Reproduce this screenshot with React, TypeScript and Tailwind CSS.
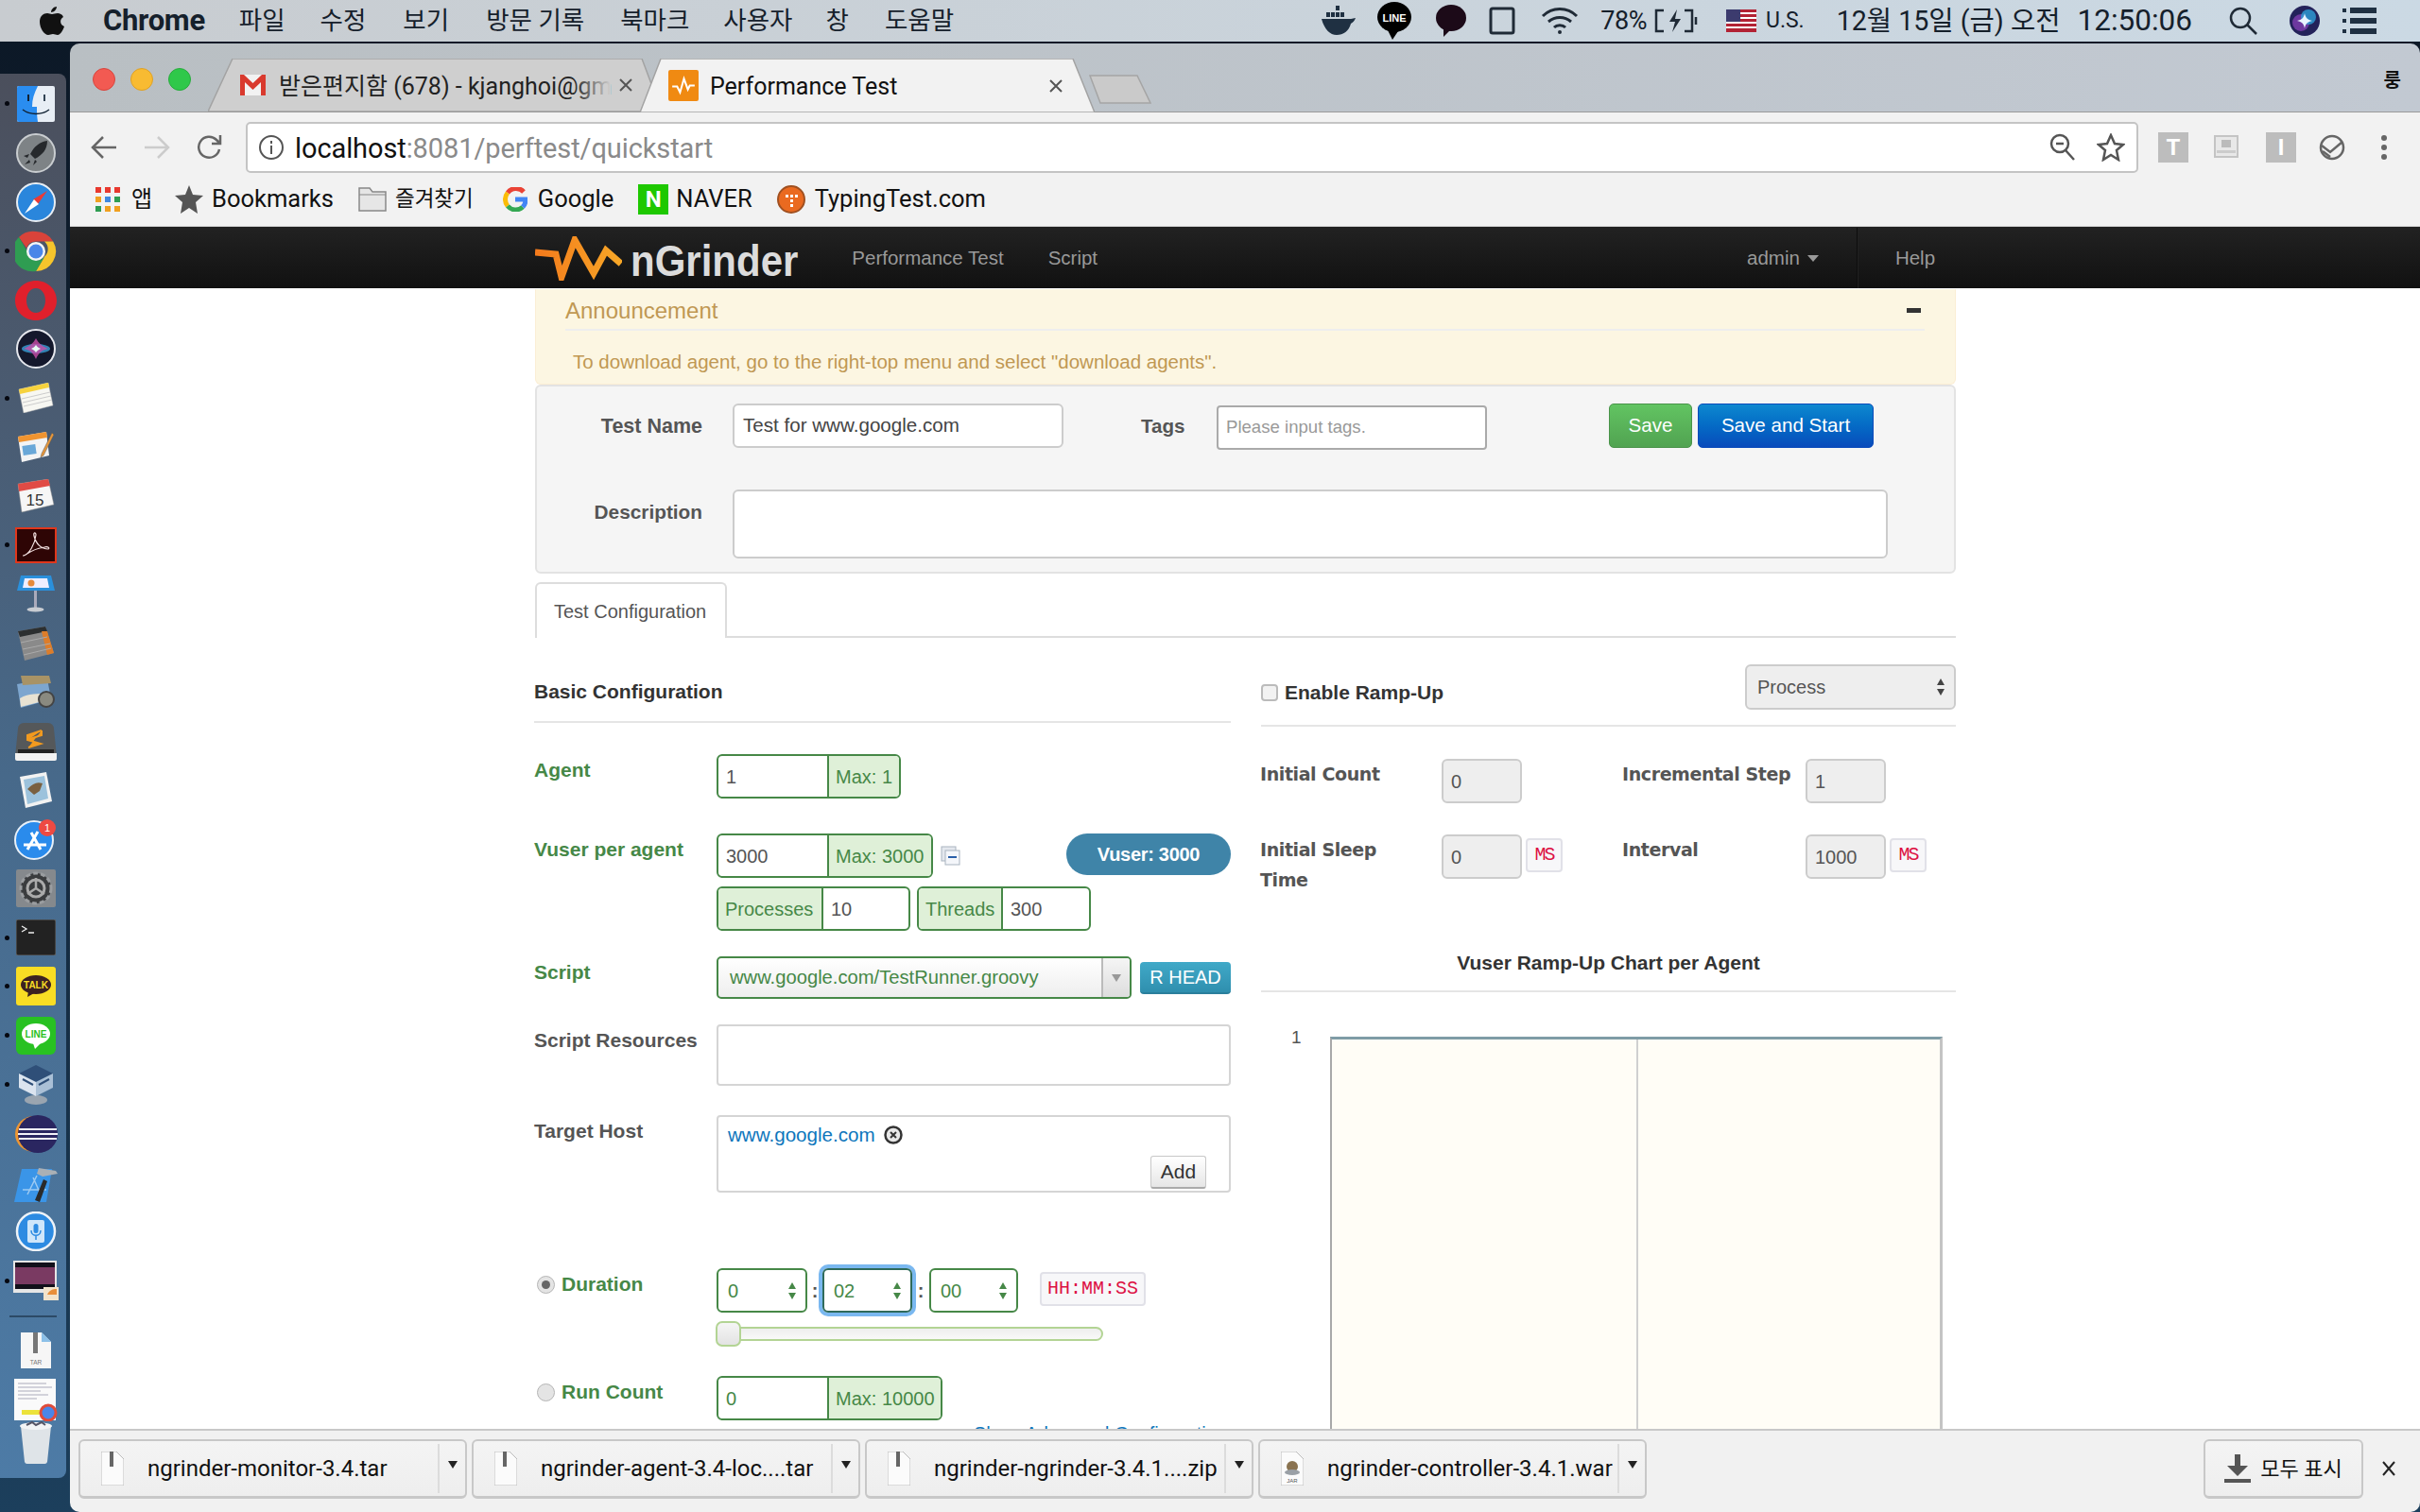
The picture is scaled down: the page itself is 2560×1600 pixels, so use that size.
import React from "react";

const ui = "font-['Roboto','Noto_Sans_CJK_KR',sans-serif]";

function DockIcon({ name }: { name: string }) {
  switch (name) {
    case "finder":
      return (
        <svg width="40" height="38" viewBox="0 0 40 38">
          <rect width="40" height="38" rx="2" fill="#e8eef5" />
          <path d="M2 0h20c-4 8-6 14-6 22h5c0 6 0 10 1 16H2a2 2 0 0 1-2-2V2a2 2 0 0 1 2-2z" fill="#2a8df0" />
          <path d="M6 25c8 6 20 6 28 0" stroke="#123" strokeWidth="1.5" fill="none" />
          <rect x="11" y="9" width="2" height="7" fill="#123" />
          <rect x="28" y="9" width="2" height="7" fill="#345" />
        </svg>
      );
    case "rocket":
      return (
        <svg width="42" height="42" viewBox="0 0 42 42">
          <circle cx="21" cy="21" r="20" fill="#7e8386" stroke="#c9cdd0" strokeWidth="2" />
          <path d="M33 8c-8 1-14 6-18 14l5 5c8-4 13-10 13-19zM14 22l-6 2 4 2zM20 28l-2 6 4-4zM14 28l-5 5 6-2z" fill="#26292c" />
        </svg>
      );
    case "safari":
      return (
        <svg width="42" height="42" viewBox="0 0 42 42">
          <circle cx="21" cy="21" r="20" fill="#2a86dc" stroke="#e8eef4" strokeWidth="2" />
          <path d="M33 9L18 18l5 5z" fill="#ea3a35" />
          <path d="M9 33l15-10-5-5z" fill="#fff" />
        </svg>
      );
    case "chrome":
      return (
        <svg width="44" height="44" viewBox="0 0 44 44">
          <path d="M22 1a21 21 0 0 1 18.2 10.5H22a10.500 10.500 0 0 0-10 7L4 7A21 21 0 0 1 22 1z" fill="#d9433a" />
          <path d="M40.200 11.500A21 21 0 0 1 22 43l9-15.500a10.500 10.500 0 0 0 0-16z" fill="#f6c52c" />
          <path d="M4 7l9 15.500a10.500 10.500 0 0 0 18 5.500L22 43A21 21 0 0 1 4 7z" fill="#2f9d52" />
          <circle cx="22" cy="22" r="10" fill="#f5f5f5" />
          <circle cx="22" cy="22" r="7.500" fill="#4a86e8" />
        </svg>
      );
    case "opera":
      return (
        <svg width="44" height="42" viewBox="0 0 44 42">
          <path fillRule="evenodd" d="M22 0c12 0 22 9 22 21s-10 21-22 21S0 33 0 21 10 0 22 0zm0 8c-6 0-10 6-10 13s4 13 10 13 10-6 10-13S28 8 22 8z" fill="#e0202c" />
        </svg>
      );
    case "siri":
      return (
        <svg width="42" height="42" viewBox="0 0 42 42">
          <circle cx="21" cy="21" r="20" fill="#14182c" stroke="#e6e8ee" strokeWidth="2" />
          <ellipse cx="21" cy="21" rx="15" ry="5" fill="#3a9fd8" opacity=".8" />
          <path d="M21 10c3 6 8 9 13 11-6 1-10 4-13 11-3-7-7-10-13-11 5-2 10-5 13-11z" fill="#c94ea8" opacity=".8" />
          <path d="M21 17c1 2 3 3 5 4-2 1-4 2-5 4-1-2-3-3-5-4 2-1 4-2 5-4z" fill="#e8fff5" />
        </svg>
      );
    case "notes":
      return (
        <svg width="38" height="32" viewBox="0 0 38 32">
          <path d="M1 7l31-7 5 24-31 8z" fill="#f7f7f2" stroke="#bbb" strokeWidth=".5" />
          <path d="M1 7l31-7 1 5L2 12z" fill="#f6d23e" />
          <path d="M4 17l30-7M5 21l30-7M6 25l30-7" stroke="#ccc" />
        </svg>
      );
    case "pages":
      return (
        <svg width="38" height="32" viewBox="0 0 38 32">
          <path d="M0 5l30-5 3 25-29 7z" fill="#f4f4f4" />
          <path d="M0 5l30-5 1 6L1 11z" fill="#f09430" />
          <rect x="5" y="14" width="14" height="10" fill="#6aa8d8" transform="rotate(-8 12 19)" />
          <path d="M36 1l2 2-11 22-3 2 1-4z" fill="#e8973a" stroke="#555" strokeWidth=".5" />
        </svg>
      );
    case "calendar":
      return (
        <svg width="40" height="36" viewBox="0 0 40 36">
          <path d="M1 5l32-5 6 27-34 8z" fill="#f6f6f6" stroke="#888" strokeWidth=".5" />
          <path d="M1 5l32-5 2 7L2 13z" fill="#e04b45" />
          <text x="19" y="28" fontSize="17" textAnchor="middle" fill="#333" fontFamily="Liberation Sans">15</text>
        </svg>
      );
    case "acrobat":
      return (
        <svg width="44" height="38" viewBox="0 0 44 38">
          <rect x="1" y="1" width="42" height="36" fill="#2e0505" stroke="#e0371c" strokeWidth="2" />
          <path d="M9 30c6-2 12-12 13-22 0-3-3-3-2 1 2 9 8 14 15 14 2-1 0-3-4-2-8 1-14 4-20 8-2 1-3 1-2 1z" stroke="#f2e0e0" strokeWidth="1.200" fill="none" />
        </svg>
      );
    case "keynote":
      return (
        <svg width="40" height="40" viewBox="0 0 40 40">
          <path d="M4 0h32l4 16H0z" fill="#2a90dc" />
          <path d="M8 3h24l2 10H6z" fill="#eef" />
          <circle cx="15" cy="8" r="3.500" fill="#e58a3b" />
          <rect x="18" y="16" width="3" height="18" fill="#aab" />
          <ellipse cx="19.500" cy="36" rx="9" ry="2.500" fill="#c8ccd2" />
        </svg>
      );
    case "calc":
      return (
        <svg width="38" height="36" viewBox="0 0 38 36">
          <path d="M0 5l29-5 9 28-31 8z" fill="#8a8a8a" />
          <path d="M0 5l29-5 2 5L2 11z" fill="#2c2f30" />
          <path d="M25 5l6 0 7 23-7 2z" fill="#dd7d2a" />
          <path d="M3 17l28-6M5 24l29-6M6 30l29-7" stroke="#aaa" />
        </svg>
      );
    case "photos":
      return (
        <svg width="44" height="36" viewBox="0 0 44 36">
          <path d="M2 9l32-6 4 22-32 9z" fill="#7da6cf" />
          <path d="M6 0h30l2 8-30 2z" fill="#a89366" />
          <path d="M5 24c10-6 18-4 30-6l2 7-31 8z" fill="#e8e2d2" />
          <circle cx="33" cy="25" r="8" fill="#8a8a80" stroke="#444" strokeWidth="2" />
        </svg>
      );
    case "sublime":
      return (
        <svg width="44" height="40" viewBox="0 0 44 40">
          <path d="M0 36l3-30a6 6 0 0 1 6-6h26a6 6 0 0 1 6 6l3 30z" fill="#55585a" />
          <path d="M0 32h44v6a2 2 0 0 1-2 2H2a2 2 0 0 1-2-2z" fill="#f2f2f2" />
          <rect x="3" y="28" width="38" height="4" fill="#222" />
          <path d="M28 8L13 13v5l14 4-13 4M28 8v5l-13 4" fill="#f29a1f" stroke="#f29a1f" strokeWidth="2" />
        </svg>
      );
    case "mail":
      return (
        <svg width="36" height="38" viewBox="0 0 36 38">
          <path d="M1 5l28-5 6 31-28 7z" fill="#f2f2f2" />
          <path d="M5 8l22-4 4 24-22 6z" fill="#9cc2dc" />
          <path d="M9 18c6-6 10-8 16-6l-3 8-6 4z" fill="#7a6040" />
        </svg>
      );
    case "appstore":
      return (
        <svg width="46" height="44" viewBox="0 0 46 44">
          <circle cx="21" cy="23" r="20" fill="#2a8bec" stroke="#e8f0f8" strokeWidth="2" />
          <path d="M14 33l11-19M28 33L18 15M10 28h24" stroke="#fff" strokeWidth="3" fill="none" />
          <circle cx="35" cy="10" r="9" fill="#ee4a42" />
          <text x="35" y="14" fontSize="11" textAnchor="middle" fill="#fff" fontFamily="Liberation Sans">1</text>
        </svg>
      );
    case "prefs":
      return (
        <svg width="42" height="40" viewBox="0 0 42 40">
          <rect width="42" height="40" rx="2" fill="#85898d" />
          <circle cx="21" cy="20" r="16" fill="#3a3c3e" stroke="#9a9da0" strokeWidth="3" strokeDasharray="5 3" />
          <circle cx="21" cy="20" r="9" fill="none" stroke="#aaa" strokeWidth="3" />
          <path d="M21 20V9M21 20l-9 6M21 20l9 6" stroke="#aaa" strokeWidth="2.500" />
        </svg>
      );
    case "terminal":
      return (
        <svg width="42" height="38" viewBox="0 0 42 38">
          <rect width="42" height="38" rx="2" fill="#222" stroke="#666" />
          <path d="M6 7l5 3-5 3M13 14h6" stroke="#eee" strokeWidth="1.300" fill="none" />
        </svg>
      );
    case "kakao":
      return (
        <svg width="42" height="41" viewBox="0 0 42 41">
          <rect width="42" height="41" rx="3" fill="#f9dd24" />
          <ellipse cx="21" cy="19" rx="16" ry="10" fill="#3c2121" />
          <path d="M13 26l-1 6 7-4z" fill="#3c2121" />
          <text x="21" y="23" fontSize="10" fontWeight="700" textAnchor="middle" fill="#f9dd24" fontFamily="Liberation Sans">TALK</text>
        </svg>
      );
    case "line":
      return (
        <svg width="42" height="40" viewBox="0 0 42 40">
          <rect width="42" height="40" rx="6" fill="#28c122" />
          <ellipse cx="21" cy="18" rx="15" ry="11" fill="#fff" />
          <path d="M18 28l2 6 6-6z" fill="#fff" />
          <text x="21" y="22" fontSize="10" fontWeight="700" textAnchor="middle" fill="#28c122" fontFamily="Liberation Sans">LINE</text>
        </svg>
      );
    case "vbox":
      return (
        <svg width="40" height="44" viewBox="0 0 40 44">
          <ellipse cx="20" cy="38" rx="12" ry="5" fill="#9aa5b0" />
          <path d="M20 1l18 9-18 9L2 10z" fill="#2f4f78" />
          <path d="M2 10l18 9v15L2 25z" fill="#dbe4ef" />
          <path d="M38 10L20 19v15l18-9z" fill="#aac0d6" />
          <path d="M6 16l11 6M23 22l11-6" stroke="#2f4f78" strokeWidth="2" />
        </svg>
      );
    case "eclipse":
      return (
        <svg width="48" height="42" viewBox="0 0 48 42">
          <ellipse cx="22" cy="21" rx="20" ry="19" fill="#ee9632" />
          <ellipse cx="26" cy="21" rx="21" ry="20" fill="#2a2660" />
          <path d="M6 16h40M5 21h42M6 26h40" stroke="#f2f2f8" strokeWidth="2" />
        </svg>
      );
    case "xcode":
      return (
        <svg width="46" height="40" viewBox="0 0 46 40">
          <path d="M8 5l32 0-6 35H0z" fill="#3a95e8" />
          <path d="M14 32l10-20M28 32L20 14M9 27h25" stroke="#9ccaf2" strokeWidth="1.500" />
          <path d="M22 38l9-22 4 2-8 22z" fill="#2a2a2a" />
          <path d="M26 4l18 3 2 3-16 3-6-3z" fill="#aab0b5" />
        </svg>
      );
    case "dict":
      return (
        <svg width="44" height="42" viewBox="0 0 44 42">
          <circle cx="22" cy="21" r="20" fill="#2d8be2" stroke="#eef3f8" strokeWidth="2.500" />
          <rect x="13" y="9" width="18" height="24" rx="2" fill="#cfe6fa" />
          <rect x="19.500" y="13" width="5" height="10" rx="2.500" fill="#2d8be2" />
          <path d="M17 20c0 7 10 7 10 0M22 26v4" stroke="#2d8be2" strokeWidth="1.500" fill="none" />
        </svg>
      );
    case "screen":
      return (
        <svg width="48" height="42" viewBox="0 0 48 42">
          <rect width="46" height="34" y="0" fill="#e6e6e6" />
          <rect x="2" y="2" width="42" height="28" fill="#12101a" />
          <rect x="2" y="7" width="42" height="18" fill="#7a3a62" />
          <path d="M32 28h16v14H32z" fill="#f2e4cc" />
          <path d="M36 36c2-5 6-6 10-6v6z" fill="#e88f3a" />
        </svg>
      );
    case "tar":
      return (
        <svg width="32" height="38" viewBox="0 0 32 38">
          <path d="M0 0h22l10 10v28H0z" fill="#f6f6f6" />
          <path d="M22 0l10 10H22z" fill="#8cc0e8" />
          <rect x="13" y="0" width="5" height="22" fill="#777" />
          <text x="16" y="34" fontSize="6.500" textAnchor="middle" fill="#777" fontFamily="Liberation Sans">TAR</text>
        </svg>
      );
    case "doc":
      return (
        <svg width="46" height="46" viewBox="0 0 46 46">
          <rect y="1" width="44" height="44" fill="#fafafa" />
          <path d="M4 6h30M4 10h36M4 14h24M4 18h32M4 22h20" stroke="#aab" />
          <rect x="8" y="34" width="26" height="5" fill="#ece23a" />
          <circle cx="36" cy="37" r="8" fill="#4a86e8" stroke="#e04b3a" strokeWidth="3" />
        </svg>
      );
    default:
      return (
        <svg width="36" height="46" viewBox="0 0 36 46">
          <path d="M2 6h32l-4 38a3 3 0 0 1-3 2H9a3 3 0 0 1-3-2z" fill="#dfe4e8" />
          <ellipse cx="18" cy="6" rx="17" ry="4" fill="#f2f4f6" />
          <path d="M8 5l6-3 4 3 6-3 4 3" stroke="#556" strokeWidth="2" fill="none" />
        </svg>
      );
  }
}

const dockTop: [string, boolean][] = [
  ["finder", true], ["rocket", false], ["safari", false], ["chrome", true], ["opera", false],
  ["siri", false], ["notes", true], ["pages", false], ["calendar", false], ["acrobat", true],
  ["keynote", false], ["calc", false], ["photos", false], ["sublime", false], ["mail", false],
  ["appstore", false], ["prefs", false], ["terminal", true], ["kakao", true], ["line", true],
  ["vbox", true], ["eclipse", false], ["xcode", false], ["dict", false], ["screen", true],
];

function Dock() {
  return (
    <div className="w-[74px] shrink-0 pt-[34px]">
      <div className="w-[70px] h-[1486px] rounded-r-[8px] pt-[6px] bg-linear-to-b from-[#4b4f5c] via-[#47698a] to-[#4d7ba6]">
        {dockTop.map(([name, on]) => (
          <div key={name} className="relative h-[51.9px] flex items-center justify-center pl-[6px]">
            {on && <span className="absolute left-[5px] w-[5px] h-[5px] rounded-full bg-[#060810]" />}
            <DockIcon name={name} />
          </div>
        ))}
        <div className="mt-[11px] ml-[10px] w-[50px] h-[2px] bg-[#2c4a66]" />
        <div className="mt-[9px] h-[52px] flex items-center justify-center pl-[6px]"><DockIcon name="tar" /></div>
        <div className="h-[52px] flex items-center justify-center pl-[6px]"><DockIcon name="doc" /></div>
        <div className="-mt-[7px] h-[52px] flex items-center justify-center pl-[6px]"><DockIcon name="trash" /></div>
      </div>
    </div>
  );
}

function MenuBar() {
  const left: [string, string][] = [
    ["파일", "ml-[36px]"], ["수정", "ml-[37px]"], ["보기", "ml-[39px]"], ["방문 기록", "ml-[39px]"],
    ["북마크", "ml-[38px]"], ["사용자", "ml-[36px]"], ["창", "ml-[35px]"], ["도움말", "ml-[38px]"],
  ];
  return (
    <div className={`${ui} h-[44px] shrink-0 flex items-center bg-linear-to-r from-[#c8ccd0] to-[#cbd9e4] text-[#15202b] pl-[42px] pr-[46px]`}>
      <svg width="26" height="32" viewBox="0 0 26 32"><path d="M18 1c0 3-3 6-6 6 0-3 3-6 6-6zM13 9c2 0 3-1 6-1 2 0 5 1 6 4-4 2-4 8 1 10-1 3-4 9-7 9-2 0-3-1-5-1s-3 1-5 1C5 31 0 24 0 17c0-6 4-9 8-9 2 0 3 1 5 1z" fill="#111" /></svg>
      <span className="ml-[41px] text-[31px] font-bold tracking-[-0.3px]">Chrome</span>
      {left.map(([t, m]) => (
        <span key={t} className={`${m} text-[26.500px] whitespace-nowrap`}>{t}</span>
      ))}
      <div className="flex-1" />
      <svg width="36" height="32" viewBox="0 0 36 32"><path d="M0 14h31c2 0 3-1 5-1-1 3-3 5-5 6-2 8-8 12-15 12S3 25 0 14z" fill="#1f3042" /><path d="M5 7h4v5H5zM10 7h4v5h-4zM15 7h4v5h-4zM20 7h4v5h-4zM15 0h4v5h-4z" fill="#1f3042" /></svg>
      <svg className="ml-[23px]" width="36" height="40" viewBox="0 0 36 40"><ellipse cx="18" cy="16" rx="18" ry="16" fill="#000" /><path d="M10 28l14 0-8 12z" fill="#000" /><text x="18" y="21" fontSize="11" fontWeight="700" textAnchor="middle" fill="#fff" fontFamily="Liberation Sans">LINE</text></svg>
      <svg className="ml-[26px]" width="32" height="34" viewBox="0 0 32 34"><ellipse cx="16" cy="14" rx="16" ry="14" fill="#1c0a18" /><path d="M8 24l8 2-8 8z" fill="#1c0a18" /></svg>
      <svg className="ml-[24px]" width="28" height="30" viewBox="0 0 28 30"><rect x="2" y="2" width="24" height="26" rx="2" fill="none" stroke="#1f2a36" strokeWidth="3" /></svg>
      <svg className="ml-[27px]" width="40" height="30" viewBox="0 0 40 30" fill="none" stroke="#1f2a36" strokeWidth="3"><path d="M2 10c10-10 26-10 36 0M8 16c7-6 17-6 24 0M14 22c3-3 9-3 12 0" /><circle cx="20" cy="27" r="2" fill="#1f2a36" stroke="none" /></svg>
      <span className="ml-[23px] text-[27px] tracking-[-0.5px]">78%</span>
      <svg className="ml-[8px]" width="46" height="26" viewBox="0 0 46 26" fill="none" stroke="#1f2a36" strokeWidth="2.500"><path d="M10 2H2v22h8M32 2h8v22h-8M44 9v8" /><path d="M24 1l-8 13h6l-3 11 9-14h-6z" fill="#1f2a36" stroke="none" /></svg>
      <svg className="ml-[30px]" width="32" height="24" viewBox="0 0 32 24"><rect width="32" height="24" fill="#b22234" /><path d="M0 4h32M0 9h32M0 14h32M0 19h32" stroke="#fff" strokeWidth="2" /><rect width="15" height="13" fill="#3c3b6e" /></svg>
      <span className="ml-[10px] text-[23px]">U.S.</span>
      <span className="ml-[34px] text-[28.600px] whitespace-nowrap">12월 15일 (금) 오전</span>
      <span className="ml-[18px] text-[31.500px] whitespace-nowrap">12:50:06</span>
      <svg className="ml-[39px]" width="30" height="30" viewBox="0 0 30 30" fill="none" stroke="#1f2a36" strokeWidth="2.500"><circle cx="12" cy="12" r="10" /><path d="M19 19l10 10" /></svg>
      <svg className="ml-[34px]" width="32" height="32" viewBox="0 0 32 32"><circle cx="16" cy="16" r="16" fill="#23225a" /><circle cx="12" cy="18" r="9" fill="#7f3fb0" opacity=".8" /><circle cx="20" cy="12" r="8" fill="#2ea0d8" opacity=".8" /><path d="M16 8c1 5 3 7 8 8-5 1-7 3-8 8-1-5-3-7-8-8 5-1 7-3 8-8z" fill="#e8f4ff" /></svg>
      <svg className="ml-[24px]" width="36" height="28" viewBox="0 0 36 28" fill="#1f3042"><rect y="1" width="4" height="4" /><rect x="8" y="0" width="28" height="6" /><rect y="12" width="4" height="4" /><rect x="8" y="11" width="28" height="6" /><rect y="23" width="4" height="4" /><rect x="8" y="22" width="28" height="6" /></svg>
    </div>
  );
}

function TabShape({ d, fill }: { d: string; fill: string }) {
  return (
    <svg className="absolute inset-0 w-full h-full" viewBox="0 0 480 56" preserveAspectRatio="none">
      <path d={d} fill={fill} stroke="#a3a3a3" strokeWidth="1.500" vectorEffect="non-scaling-stroke" />
    </svg>
  );
}

function TabStrip() {
  return (
    <div className={`${ui} relative h-[73px] shrink-0 flex items-end pl-[24px] bg-linear-to-r from-[#b9bfc3] to-[#c2c9d2] border-b-[1px] border-[#9a9a9a]`}>
      <div className="self-start mt-[26px] flex gap-[16px]">
        <span className="w-[24px] h-[24px] rounded-full bg-[#f25a52] border border-[#d8453d]" />
        <span className="w-[24px] h-[24px] rounded-full bg-[#f8bb32] border border-[#dea126]" />
        <span className="w-[24px] h-[24px] rounded-full bg-[#2fc84a] border border-[#27ac3c]" />
      </div>
      <div className="relative ml-[18px] w-[480px] h-[56px] flex items-center pl-[34px] text-[25px] text-[#222]">
        <TabShape d="M0 56 L26 0 H459 L480 56 Z" fill="#cfcfcf" />
        <svg className="relative" width="27" height="22" viewBox="0 0 27 22"><rect width="27" height="22" fill="#f2f2f2" /><path d="M0 0l4 0 9.500 9L23 0h4v22h-5V8l-8.500 8L5 8v14H0z" fill="#d93a2e" /></svg>
        <div className="relative ml-[14px] w-[351px] pt-[3px] whitespace-nowrap">
          받은편지함 (678) - kjanghoi@gm
          <span className="absolute right-0 top-0 bottom-0 w-[40px] bg-linear-to-r from-transparent to-[#cfcfcf]" />
        </div>
        <svg className="relative ml-[9px]" width="14" height="14" viewBox="0 0 14 14" stroke="#555" strokeWidth="2"><path d="M1 1l12 12M13 1L1 13" /></svg>
      </div>
      <div className="relative -ml-[23px] -mb-[1px] w-[481px] h-[57px] flex items-center pl-[30px] text-[25px] text-[#111]">
        <TabShape d="M0 56 L22 0 H457 L480 56 Z" fill="#f2f2f2" />
        <svg className="relative" width="32" height="33" viewBox="0 0 31 32"><rect width="31" height="32" rx="2" fill="#f08a12" /><path d="M4 17h5l3 6 4-14 4 11 2-4h5" stroke="#fff" strokeWidth="2" fill="none" /></svg>
        <span className="relative ml-[12px] pt-[2px] w-[359px] whitespace-nowrap">Performance Test</span>
        <svg className="relative" width="14" height="14" viewBox="0 0 14 14" stroke="#555" strokeWidth="2"><path d="M1 1l12 12M13 1L1 13" /></svg>
      </div>
      <svg className="-ml-[6px] self-start mt-[33px]" width="66" height="31" viewBox="0 0 66 31"><path d="M1 1h50l14 29H12z" fill="#cacaca" stroke="#a5a5a5" strokeWidth="1.500" /></svg>
      <span className="absolute right-[20px] top-[24px] text-[20px] font-bold text-[#111]">룽</span>
    </div>
  );
}

function Toolbar() {
  return (
    <div className={`${ui} h-[121px] shrink-0 bg-[#f2f2f2] border-b border-[#d5d5d5]`}>
      <div className="h-[65px] pt-[10px] flex items-start">
        <div className="w-[186px] h-[54px] flex items-center pl-[22px]">
          <svg width="28" height="26" viewBox="0 0 28 26" fill="none" stroke="#666" strokeWidth="2.500"><path d="M27 13H3M13 2L2 13l11 11" /></svg>
          <svg className="ml-[28px]" width="28" height="26" viewBox="0 0 28 26" fill="none" stroke="#ccc" strokeWidth="2.500"><path d="M1 13h24M15 2l11 11-11 11" /></svg>
          <svg className="ml-[28px]" width="28" height="28" viewBox="0 0 28 28" fill="none" stroke="#666" strokeWidth="2.500"><path d="M24 16a11 11 0 1 1-3-10l4 4M25 1v9h-9" /></svg>
        </div>
        <div className="w-[2002px] h-[54px] bg-white border-[2px] border-[#c4c4c4] rounded-[5px] flex items-center pl-[11px] pr-[12px]">
          <svg width="28" height="28" viewBox="0 0 28 28" fill="none" stroke="#555" strokeWidth="2"><circle cx="14" cy="14" r="12" /><path d="M14 12v9M14 7v3" /></svg>
          <span className="ml-[11px] pt-[3px] text-[29px] text-[#111] tracking-[-0.1px]">localhost<span className="text-[#8a8a8a]">:8081/perftest/quickstart</span></span>
          <div className="flex-1" />
          <svg width="28" height="30" viewBox="0 0 28 30" fill="none" stroke="#555" strokeWidth="2.500"><circle cx="11" cy="11" r="9" /><path d="M17 18l9 10M7 11h8" /></svg>
          <svg className="ml-[22px]" width="30" height="30" viewBox="0 0 30 30" fill="none" stroke="#555" strokeWidth="2.500"><path d="M15 2l4 9 9 1-7 6 2 10-8-5-8 5 2-10-7-6 9-1z" /></svg>
        </div>
        <div className="h-[54px] flex items-center">
          <span className="ml-[21px] w-[32px] h-[32px] bg-[#bdbdbd] text-white text-[24px] font-bold flex items-center justify-center">T</span>
          <svg className="ml-[27px]" width="26" height="26" viewBox="0 0 26 26"><rect x="1" y="1" width="24" height="22" fill="#e8e8e8" stroke="#c4c4c4" strokeWidth="2" /><rect x="8" y="5" width="10" height="8" fill="#bbb" /><rect x="3" y="16" width="20" height="3" fill="#ccc" /></svg>
          <span className="ml-[29px] w-[32px] h-[32px] bg-[#bdbdbd] text-white text-[24px] font-bold flex items-center justify-center">I</span>
          <svg className="ml-[24px]" width="28" height="28" viewBox="0 0 28 28" fill="none" stroke="#666" strokeWidth="2.500"><circle cx="14" cy="14" r="12" /><path d="M3 12l9 7 13-11M4 18l8 6" /></svg>
          <svg className="ml-[37px]" width="8" height="28" viewBox="0 0 8 28" fill="#666"><circle cx="4" cy="4" r="3" /><circle cx="4" cy="14" r="3" /><circle cx="4" cy="24" r="3" /></svg>
        </div>
      </div>
      <div className="h-[55px] -mt-[1px] flex items-center pl-[27px] text-[25.500px] text-[#111]">
        <svg width="26" height="26" viewBox="0 0 26 26">
          {["#e8392f", "#e8392f", "#e8392f", "#f0a020", "#3f88e0", "#2f9d52", "#2f9d52", "#f0a020", "#f0a020"].map((c, i) => (
            <rect key={i} x={(i % 3) * 10} y={Math.floor(i / 3) * 10} width="6" height="6" fill={c} />
          ))}
        </svg>
        <span className="ml-[12px] text-[24px]">앱</span>
        <svg className="ml-[24px]" width="30" height="30" viewBox="0 0 30 30"><path d="M15 0l4 10 11 1-8 7 2 12-9-6-9 6 2-12-8-7 11-1z" fill="#555" /></svg>
        <span className="ml-[9px]">Bookmarks</span>
        <svg className="ml-[26px]" width="30" height="26" viewBox="0 0 30 26"><path d="M1 1h11l3 4h14v20H1z" fill="#e6e6e6" stroke="#888" strokeWidth="1.500" /><path d="M1 8h28" stroke="#888" /></svg>
        <span className="ml-[9px] text-[22.500px]">즐겨찾기</span>
        <svg className="ml-[31px]" width="26" height="26" viewBox="0 0 26 26" fill="none" strokeWidth="5"><path d="M22 5A11 11 0 0 0 5 6" stroke="#ea4335" /><path d="M5 6a11 11 0 0 0 0 14" stroke="#fbbc05" /><path d="M5 20a11 11 0 0 0 16 1" stroke="#34a853" /><path d="M21 21a11 11 0 0 0 3-8H13" stroke="#4285f4" /></svg>
        <span className="ml-[11px]">Google</span>
        <span className="ml-[26px] w-[32px] h-[32px] bg-[#1ec800] text-white text-[24px] font-bold flex items-center justify-center">N</span>
        <span className="ml-[8px]">NAVER</span>
        <svg className="ml-[26px]" width="30" height="30" viewBox="0 0 30 30"><circle cx="15" cy="15" r="14" fill="#ea6a20" stroke="#a05020" strokeWidth="2" /><path d="M9 10h3v3H9zM14 10h3v3h-3zM19 10h3v3h-3zM14 15h3v3h-3zM14 20h3v3h-3z" fill="#fff" /></svg>
        <span className="ml-[10px]">TypingTest.com</span>
      </div>
    </div>
  );
}

function NavBar() {
  return (
    <div className="h-[65px] shrink-0 flex items-center pl-[492px] pt-[1px] bg-linear-to-b from-[#222222] to-[#111111] text-[#999999] text-[20.500px]">
      <svg width="92" height="47" viewBox="0 0 92 47" fill="none" strokeWidth="7" strokeLinejoin="miter"><defs><linearGradient id="wave" x1="0" y1="0" x2="1" y2="0"><stop offset="0" stopColor="#f47a1c" /><stop offset="1" stopColor="#f7a727" /></linearGradient></defs><path d="M0 17l22 2 6 24L42 4l20 35 13-24 16 14" stroke="url(#wave)" /></svg>
      <span className="ml-[9px] pt-[12px] text-[42px] leading-none font-bold text-[#dcdcdc] scale-y-[1.12] origin-bottom">nGrinder</span>
      <span className="ml-[57px]">Performance Test</span>
      <span className="ml-[47px]">Script</span>
      <span className="ml-[687px]">admin</span>
      <span className="ml-[8px] w-0 h-0 border-x-[6px] border-x-transparent border-t-[7px] border-t-[#999999]" />
      <span className="ml-[40px] h-full w-[2px] bg-[#222222] border-l border-[#0c0c0c]" />
      <span className="ml-[39px]">Help</span>
    </div>
  );
}

const greenBox = "flex border-[2px] border-[#468847] rounded-[6px] h-[47px] text-[20px] text-[#468847] items-stretch overflow-hidden";

function MaxGroup({ value, max, valueColor = "text-[#555555]", w }: { value: string; max: string; valueColor?: string; w: string }) {
  return (
    <div className={`${greenBox} ${w}`}>
      <span className={`w-[115px] pl-[8px] flex items-center ${valueColor}`}>{value}</span>
      <span className="flex-1 bg-[#dff0d8] border-l-[2px] border-[#468847] pl-[7px] flex items-center whitespace-nowrap">{max}</span>
    </div>
  );
}

function AddonGroup({ label, value, labelW, w }: { label: string; value: string; labelW: string; w: string }) {
  return (
    <div className={`${greenBox} ${w}`}>
      <span className={`${labelW} bg-[#dff0d8] border-r-[2px] border-[#468847] pl-[7px] flex items-center`}>{label}</span>
      <span className="flex-1 pl-[8px] flex items-center text-[#555555]">{value}</span>
    </div>
  );
}

function Spinner({ color }: { color: string }) {
  return (
    <svg width="10" height="18" viewBox="0 0 10 18" fill={color}><path d="M5 0l4 7H1zM5 18l-4-7h8z" /></svg>
  );
}

function TimeBox({ value, focused, w }: { value: string; focused?: boolean; w: string }) {
  return (
    <div className={`${w} h-[47px] flex items-center justify-between pl-[10px] pr-[9px] border-[2px] rounded-[6px] text-[20px] text-[#468847] ${focused ? "border-[#2f6a5a] shadow-[0_0_0_4px_#7ab8f0]" : "border-[#468847]"}`}>
      {value}
      <Spinner color="#468847" />
    </div>
  );
}

function Radio({ on }: { on?: boolean }) {
  return (
    <span className="ml-[3px] w-[19px] h-[19px] shrink-0 rounded-full bg-[#e4e4e4] border border-[#b5b5b5] flex items-center justify-center">
      {on && <span className="w-[9px] h-[9px] rounded-full bg-[#666666]" />}
    </span>
  );
}

function FormRow({ label, top, pt, color = "text-[#555555]", children, radio }: { label: string; top: string; pt: string; color?: string; children: React.ReactNode; radio?: React.ReactNode }) {
  return (
    <div className={`flex ${top}`}>
      <div className={`w-[193px] shrink-0 ${pt} flex items-center gap-[7px] leading-[24px] text-[21px] font-bold ${color}`}>
        {radio}
        {label}
      </div>
      <div className="flex-1">{children}</div>
    </div>
  );
}

function LeftColumn() {
  const green = "text-[#468847]";
  return (
    <div className="w-[737px] shrink-0">
      <div className="pt-[45px] pb-[19px] leading-[24px] text-[21px] font-bold text-[#333333] border-b-[2px] border-[#e5e5e5]">Basic Configuration</div>
      <FormRow label="Agent" top="mt-[33px]" pt="pt-[5px] self-start" color={green}>
        <MaxGroup value="1" max="Max: 1" w="w-[195px]" />
      </FormRow>
      <FormRow label="Vuser per agent" top="mt-[37px]" pt="pt-[5px] self-start" color={green}>
        <div className="flex items-start">
          <MaxGroup value="3000" max="Max: 3000" w="w-[229px]" />
          <svg className="ml-[8px] mt-[13px]" width="22" height="21" viewBox="0 0 22 21"><rect x="1" y="1" width="15" height="15" fill="#e4e8ee" stroke="#a9b4c0" /><rect x="5" y="5" width="15" height="15" fill="#f4f6fa" stroke="#a9b4c0" /><path d="M8 12h9" stroke="#2a5fa8" strokeWidth="2" /></svg>
          <span className="ml-auto w-[174px] h-[44px] rounded-full bg-[#3f84a8] text-white font-bold text-[20px] flex items-center justify-center tracking-[-0.3px]">Vuser: 3000</span>
        </div>
        <div className="flex mt-[9px] gap-[7px]">
          <AddonGroup label="Processes" value="10" labelW="w-[111px]" w="w-[205px]" />
          <AddonGroup label="Threads" value="300" labelW="w-[89px]" w="w-[184px]" />
        </div>
      </FormRow>
      <FormRow label="Script" top="mt-[27px]" pt="pt-[5px] self-start" color={green}>
        <div className="flex items-center">
          <div className="w-[439px] h-[45px] flex border-[2px] border-[#468847] rounded-[5px] overflow-hidden bg-linear-to-b from-white to-[#eeeeee]">
            <span className="flex-1 pl-[12px] flex items-center text-[20.200px] text-[#468847]">www.google.com/TestRunner.groovy</span>
            <span className="w-[30px] border-l-[2px] border-[#bbbbbb] bg-linear-to-b from-[#f5f5f5] to-[#dddddd] flex items-center justify-center">
              <span className="w-0 h-0 border-x-[5px] border-x-transparent border-t-[8px] border-t-[#999999]" />
            </span>
          </div>
          <span className="ml-[9px] w-[96px] h-[34px] rounded-[4px] bg-linear-to-b from-[#40a9c8] to-[#2f8fae] border-b-[2px] border-[#2a7f9c] text-white text-[20px] flex items-center justify-center">R HEAD</span>
        </div>
      </FormRow>
      <FormRow label="Script Resources" top="mt-[27px]" pt="pt-[5px] self-start">
        <div className="h-[65px] border-[2px] border-[#d5d5d5] rounded-[4px]" />
      </FormRow>
      <FormRow label="Target Host" top="mt-[31px]" pt="pt-[5px] self-start">
        <div className="h-[82px] border-[2px] border-[#d5d5d5] rounded-[4px] pl-[10px] pr-[24px] pt-[7px] flex flex-col">
          <div className="flex items-center text-[20.600px] text-[#0e76bc] leading-[24px]">
            www.google.com
            <svg className="ml-[9px]" width="20" height="20" viewBox="0 0 20 20"><circle cx="10" cy="10" r="8.500" fill="#e8e8e8" stroke="#333" strokeWidth="2.500" /><path d="M7 7l6 6M13 7l-6 6" stroke="#333" strokeWidth="2" /></svg>
          </div>
          <span className="self-end mt-[10px] w-[59px] h-[35px] rounded-[3px] border border-[#c8c8c8] border-b-[2px] border-b-[#aaaaaa] bg-linear-to-b from-white to-[#e6e6e6] text-[21px] text-[#333333] flex items-center justify-center">Add</span>
        </div>
      </FormRow>
      <FormRow label="Duration" top="mt-[80px]" pt="pt-[5px] self-start" color={green} radio={<Radio on />}>
        <div className="flex items-center">
          <TimeBox value="0" w="w-[96px]" />
          <span className="w-[16px] text-center text-[20px] font-bold text-[#555555]">:</span>
          <TimeBox value="02" focused w="w-[95px]" />
          <span className="w-[18px] text-center text-[20px] font-bold text-[#555555]">:</span>
          <TimeBox value="00" w="w-[94px]" />
          <span className="ml-[23px] w-[112px] h-[36px] rounded-[4px] bg-[#f7f7f9] border-[2px] border-[#e1e1e8] text-[#dd1144] text-[20px] font-['Liberation_Mono',monospace] flex items-center justify-center -mt-[3px]">HH:MM:SS</span>
        </div>
        <div className="relative mt-[9px] -ml-[1px] w-[410px] h-[27px] flex items-center">
          <div className="w-full h-[15px] rounded-full border-[2px] border-[#b3d494] bg-linear-to-b from-[#eeeeee] to-[#f9f9f9]" />
          <span className="absolute left-0 top-0 w-[27px] h-[27px] rounded-[7px] border-[2px] border-[#b3d494] bg-linear-to-b from-[#f5f5f5] to-[#e3e3e3]" />
        </div>
      </FormRow>
      <FormRow label="Run Count" top="mt-[31px]" pt="pt-[5px] self-start" color={green} radio={<Radio />}>
        <MaxGroup value="0" max="Max: 10000" valueColor="text-[#468847]" w="w-[239px]" />
      </FormRow>
      <div className="mt-[2px] pl-[465px] text-[20px] text-[#0e76bc] leading-[24px] whitespace-nowrap">Show Advanced Configuration</div>
    </div>
  );
}

function GreyInput({ value }: { value: string }) {
  return (
    <span className="w-[85px] h-[47px] shrink-0 rounded-[6px] border-[2px] border-[#cccccc] bg-[#eeeeee] text-[20px] text-[#555555] pl-[8px] flex items-center">{value}</span>
  );
}

function MsTag() {
  return (
    <span className="ml-[4px] mt-[4px] w-[39px] h-[36px] rounded-[4px] bg-[#f7f7f9] border-[2px] border-[#e1e1e8] text-[#dd1144] text-[20px] font-['Liberation_Mono',monospace] flex items-center justify-center tracking-[-2px]">MS</span>
  );
}

function RightColumn() {
  const lbl = "font-['DejaVu_Sans',sans-serif] leading-[32px] text-[19px] font-bold text-[#555555] tracking-[-0.4px] -ml-[1px] pr-[1px]";
  return (
    <div className="w-[735px] shrink-0">
      <div className="pt-[28px] pb-[16px] flex items-center border-b-[2px] border-[#e5e5e5]">
        <span className="mt-[12px] w-[18px] h-[18px] rounded-[4px] border-[2px] border-[#bbbbbb] bg-[#f2f2f2]" />
        <span className="mt-[12px] ml-[7px] text-[21px] font-bold text-[#333333]">Enable Ramp-Up</span>
        <div className="ml-auto w-[223px] h-[48px] rounded-[6px] border-[2px] border-[#cccccc] bg-[#eeeeee] pl-[11px] pr-[9px] flex items-center justify-between text-[20px] text-[#555555]">
          Process
          <Spinner color="#444444" />
        </div>
      </div>
      <div className="mt-[34px] flex">
        <div className="w-[383px] flex">
          <span className={`w-[192px] ${lbl}`}>Initial Count</span>
          <GreyInput value="0" />
        </div>
        <span className={`w-[194px] ${lbl}`}>Incremental Step</span>
        <GreyInput value="1" />
      </div>
      <div className="mt-[33px] flex">
        <div className="w-[383px] flex">
          <span className={`w-[192px] ${lbl}`}>Initial Sleep<br />Time</span>
          <GreyInput value="0" />
          <MsTag />
        </div>
        <span className={`w-[194px] ${lbl}`}>Interval</span>
        <GreyInput value="1000" />
        <MsTag />
      </div>
      <div className="mt-[60px] pb-[17px] leading-[24px] text-center text-[21px] font-bold text-[#333333] border-b-[2px] border-[#e5e5e5]">Vuser Ramp-Up Chart per Agent</div>
      <div className="mt-[47px] flex items-start">
        <span className="w-[73px] pl-[32px] -mt-[11px] text-[19px] text-[#555555] leading-[24px]">1</span>
        <div className="w-[648px] h-[600px] flex bg-[#fffdf6] border-t-[3px] border-t-[#7f9ca6] border-l-[2px] border-l-[#a9a9a9] border-r-[3px] border-r-[#c4c4c4]">
          <div className="w-[324px] border-r-[2px] border-[#d0d0d0]" />
        </div>
      </div>
    </div>
  );
}

function Page() {
  return (
    <div className="flex-1 min-h-0 overflow-hidden bg-white pl-[491px]">
      <div className="w-[1504px]">
        <div className="ml-[1px] mt-[1px] h-[101px] rounded-b-[6px] bg-[#fcf6e2] border border-t-0 border-[#fbeed5] pl-[31px] pr-[32px] text-[#c09853]">
          <div className="h-[44px] flex items-center justify-between border-b-[2px] border-[#eeeeee]">
            <span className="text-[24px] leading-none pt-[3px]">Announcement</span>
            <span className="w-[15px] h-[5px] bg-[#333333] mr-[4px] mb-[-2px]" />
          </div>
          <div className="pl-[8px] mt-[21px] text-[20.500px] leading-[24px]">To download agent, go to the right-top menu and select "download agents".</div>
        </div>
        <div className="ml-[1px] h-[200px] rounded-[6px] bg-[#f5f5f5] border-[2px] border-[#e3e3e3] text-[20.600px]">
          <div className="flex items-start pt-[18px]">
            <span className="w-[175px] pt-[1px] text-right font-bold text-[21.500px] text-[#555555] leading-[47px]">Test Name</span>
            <span className="ml-[32px] w-[350px] h-[47px] bg-white rounded-[6px] border-[2px] border-[#cccccc] pl-[9px] flex items-center text-[#444444]">Test for www.google.com</span>
            <span className="ml-[82px] w-[48px] font-bold text-[#555555] leading-[47px]">Tags</span>
            <span className="ml-[32px] mt-[2px] w-[286px] h-[47px] bg-white rounded-[4px] border-[2px] border-[#aaaaaa] pl-[8px] pb-[2px] flex items-center text-[#999999] text-[18.600px]">Please input tags.</span>
            <span className="ml-[129px] w-[88px] h-[47px] rounded-[5px] bg-linear-to-b from-[#62c462] to-[#51a351] border border-[#4a934a] text-white flex items-center justify-center">Save</span>
            <span className="ml-[6px] w-[186px] h-[47px] rounded-[5px] bg-linear-to-b from-[#0f88cf] to-[#0a4bbb] border border-[#0a4bbb] text-white flex items-center justify-center">Save and Start</span>
          </div>
          <div className="flex items-start mt-[42px]">
            <span className="w-[175px] text-right font-bold text-[20.800px] text-[#555555] leading-[47px]">Description</span>
            <span className="ml-[32px] w-[1222px] h-[73px] bg-white rounded-[6px] border-[2px] border-[#cccccc]" />
          </div>
        </div>
        <div className="ml-[1px] mt-[9px] border-b-[2px] border-[#dddddd] h-[59px]">
          <div className="w-[203px] h-[59px] bg-white border-[2px] border-b-0 border-[#dddddd] rounded-t-[6px] text-[20px] text-[#555555] flex items-center pl-[18px]">Test Configuration</div>
        </div>
        <div className="flex gap-[32px]">
          <LeftColumn />
          <RightColumn />
        </div>
      </div>
    </div>
  );
}

function DownloadItem({ name, jar }: { name: string; jar?: boolean }) {
  return (
    <div className="w-[411px] h-[63px] shrink-0 flex items-center rounded-[6px] border-[2px] border-[#c8c8c8] border-b-[3px] bg-linear-to-b from-[#f4f4f4] to-[#eeeeee] pl-[22px]">
      {jar ? (
        <svg width="24" height="36" viewBox="0 0 24 36"><path d="M0 0h16l8 8v28H0z" fill="#fbfbfb" stroke="#bbb" /><circle cx="12" cy="16" r="6" fill="#8a7350" /><ellipse cx="12" cy="22" rx="8" ry="3" fill="#9aa0a6" /><text x="12" y="33" fontSize="6" textAnchor="middle" fill="#555" fontFamily="Liberation Sans">JAR</text></svg>
      ) : (
        <svg width="24" height="36" viewBox="0 0 24 36"><path d="M0 0h16l8 8v28H0z" fill="#fbfbfb" stroke="#bbb" /><rect x="9" y="0" width="4" height="16" fill="#666" /></svg>
      )}
      <span className="ml-[25px] w-[307px] text-[24px] text-[#111] whitespace-nowrap">{name}</span>
      <span className="h-[52px] w-[2px] bg-[#dcdcdc]" />
      <span className="ml-[9px] w-0 h-0 border-x-[5px] border-x-transparent border-t-[8px] border-t-[#222222] -mt-[8px]" />
    </div>
  );
}

function DownloadBar() {
  return (
    <div className={`${ui} h-[88px] shrink-0 flex items-start pt-[9px] pl-[9px] gap-[5px] bg-[#f1f1f1] border-t-[2px] border-[#c8c8c8]`}>
      <DownloadItem name="ngrinder-monitor-3.4.tar" />
      <DownloadItem name="ngrinder-agent-3.4-loc....tar" />
      <DownloadItem name="ngrinder-ngrinder-3.4.1....zip" />
      <DownloadItem name="ngrinder-controller-3.4.1.war" jar />
      <div className="ml-auto w-[169px] h-[63px] rounded-[6px] border-[2px] border-[#c8c8c8] border-b-[3px] bg-linear-to-b from-[#f4f4f4] to-[#eeeeee] flex items-center justify-center gap-[10px] text-[22px] text-[#111]">
        <svg width="28" height="30" viewBox="0 0 28 30" fill="#555"><path d="M11 0h6v12h8L14 23 3 12h8z" /><rect y="26" width="28" height="4" /></svg>
        모두 표시
      </div>
      <svg className="ml-[15px] mr-[26px] mt-[23px]" width="14" height="16" viewBox="0 0 14 16" stroke="#222" strokeWidth="2"><path d="M1 1l12 14M13 1L1 15" /></svg>
    </div>
  );
}

export default function App() {
  return (
    <div className="w-[2560px] h-[1600px] flex flex-col overflow-hidden bg-linear-to-b from-[#0c1826] via-[#13263a] to-[#1c3f5c] font-['Liberation_Sans','Noto_Sans_CJK_KR',sans-serif]">
      <MenuBar />
      <div className="flex flex-1 min-h-0">
        <Dock />
        <div className="flex-1 mt-[2px] flex flex-col min-w-0 rounded-t-[10px] rounded-b-[10px] overflow-hidden">
          <TabStrip />
          <Toolbar />
          <NavBar />
          <Page />
          <DownloadBar />
        </div>
      </div>
    </div>
  );
}
